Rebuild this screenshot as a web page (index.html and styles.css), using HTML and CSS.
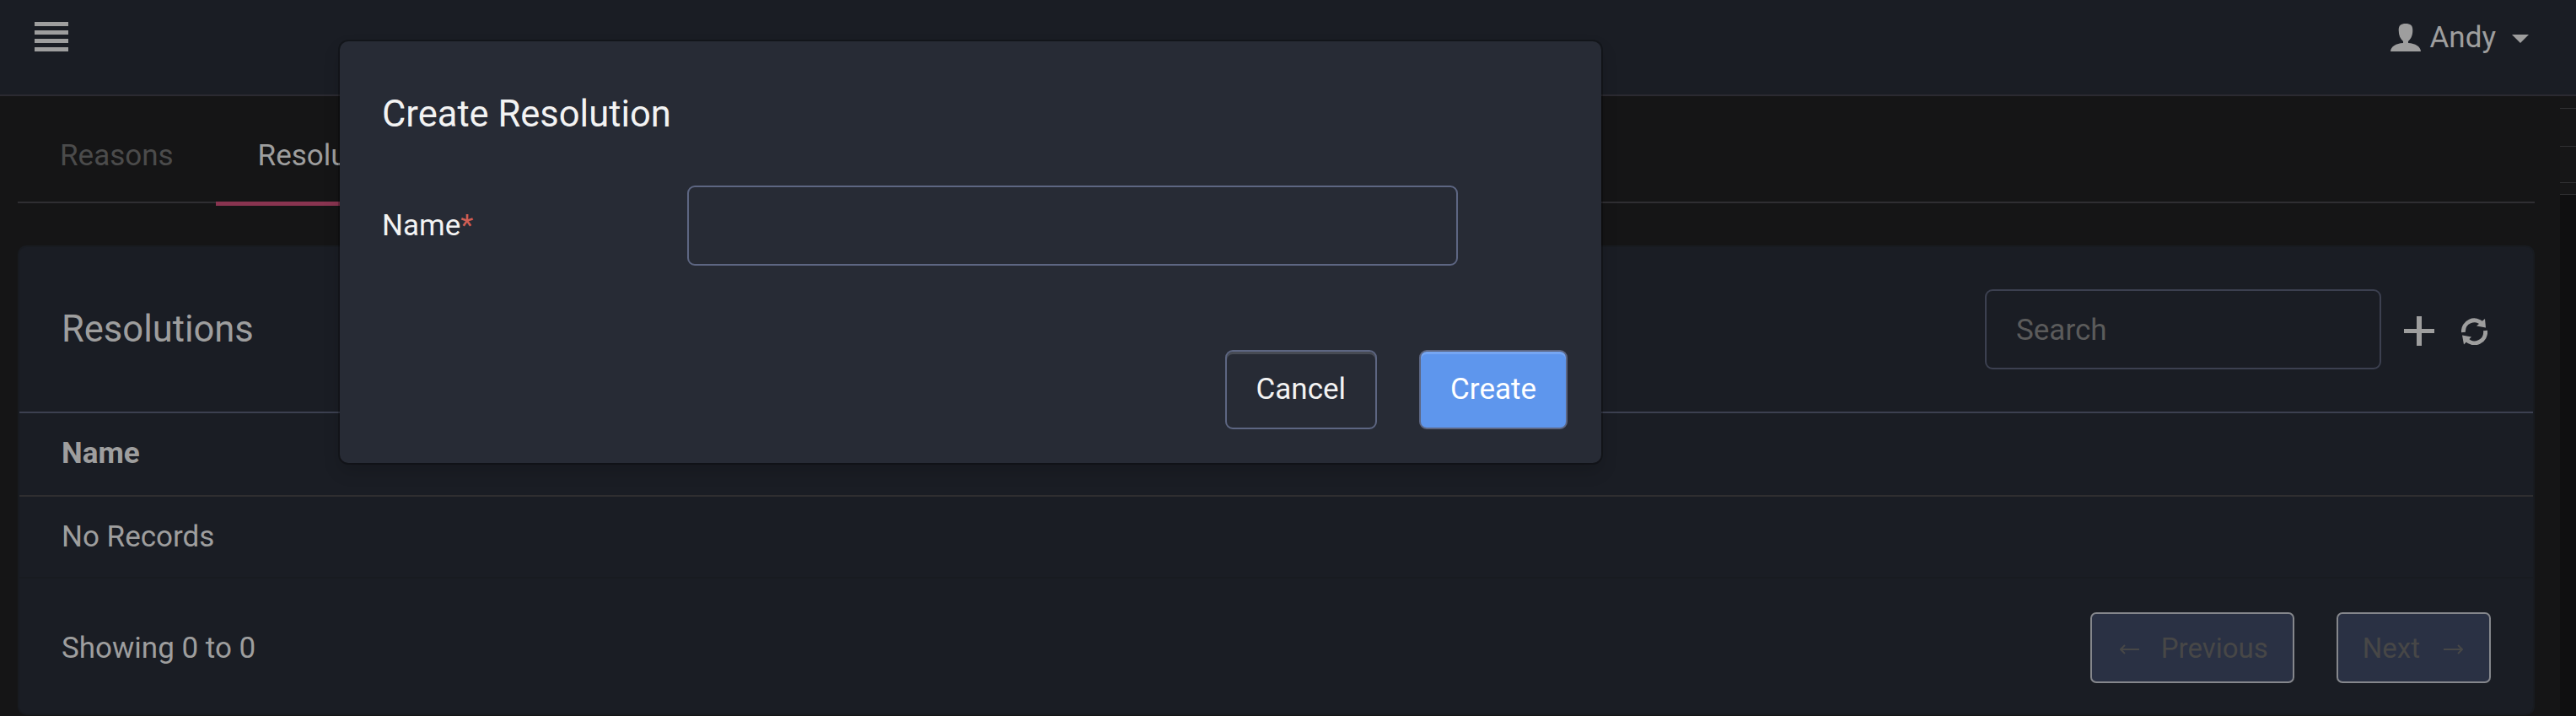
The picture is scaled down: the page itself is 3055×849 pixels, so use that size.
FILE: index.html
```html
<!DOCTYPE html>
<html lang="en">
<head>
    <meta charset="UTF-8">
    <meta name="viewport" content="width=device-width, initial-scale=1.0">
    <title>Resolutions</title>
    <link rel="stylesheet" href="styles.css">
</head>
<body>
    <header class="navbar">
        <button class="menu-toggle" aria-label="Menu">
            <svg width="40" height="35" viewBox="0 0 40 35"><path d="M0 0h40v5H0zM0 10h40v5H0zM0 20h40v5H0zM0 30h40v5H0z"/></svg>
        </button>
        <div class="user-menu">
            <svg class="user-icon" width="36" height="33" viewBox="0 0 36 33"><path d="M18 0c5.500 0 8.500 2 8.300 8 0 6-2 10-5.300 13v2c8.500.5 14.500 4 15 10H0c.5-6 6.500-9.500 15-10v-2c-3.300-3-5.200-7-5.300-13C9.500 2 12.500 0 18 0z"/></svg>
            <span class="user-name">Andy</span>
            <span class="caret"></span>
        </div>
    </header>

    <div class="page">
        <main class="content">
            <nav class="tabs">
                <a class="tab">Reasons</a>
                <a class="tab active">Resolutions</a>
            </nav>

            <section class="card">
                <div class="card-header">
                    <h2>Resolutions</h2>
                    <div class="tools">
                        <input class="search" type="text" placeholder="Search">
                        <svg class="plus" width="36" height="35" viewBox="0 0 36 35"><path d="M15 0h6v15h15v5H21v15h-6V20H0v-5h15z"/></svg>
                        <svg class="refresh" width="31" height="32" viewBox="0 0 31 32">
                            <path class="arc" d="M2.500 17A13 13 0 0 1 25 7M28.500 15A13 13 0 0 1 6 25.500"/>
                            <path d="M28 1l1 10.500-11-2zM1 20.500l11 2-9 9z"/>
                        </svg>
                    </div>
                </div>
                <div class="row row-head">Name</div>
                <div class="row">No Records</div>
                <div class="card-footer">
                    <span>Showing 0 to 0</span>
                    <div class="pager">
                        <button class="page-btn prev" disabled><svg width="23" height="12" viewBox="0 0 23 12"><path d="M23 6H1M6 1L1 6l5 5"/></svg><span>Previous</span></button>
                        <button class="page-btn next" disabled><span>Next</span><svg width="23" height="12" viewBox="0 0 23 12"><path d="M0 6h22M17 1l5 5-5 5"/></svg></button>
                    </div>
                </div>
            </section>
        </main>
        <aside class="rail">
            <div class="rail-item rail-first"></div>
            <div class="rail-item rail-second"></div>
            <div class="rail-item rail-third"></div>
            <div class="rail-item rail-fourth"></div>
        </aside>
    </div>

    <div class="dialog" role="dialog">
        <h3>Create Resolution</h3>
        <div class="field">
            <label for="name">Name<span class="required">*</span></label>
            <input id="name" type="text">
        </div>
        <div class="actions">
            <button class="btn">Cancel</button>
            <button class="btn btn-primary">Create</button>
        </div>
    </div>
</body>
</html>
```

FILE: styles.css
```css
* {
    box-sizing: border-box;
}
html,
body {
    height: 100%;
    margin: 0;
    overflow: hidden;
}
body {
    display: flex;
    flex-direction: column;
    background-color: #151516;
    color: #9e9e9e;
    font-family: Roboto, "Liberation Sans", sans-serif;
    font-size: 35px;
}
h2,
h3 {
    margin: 0;
    font-weight: 400;
}
input,
button {
    font: inherit;
}
svg {
    display: block;
    flex: none;
    fill: #9e9e9e;
}
.navbar {
    display: flex;
    flex: none;
    justify-content: space-between;
    align-items: flex-start;
    height: 114px;
    padding: 26px 56px 0 41px;
    background-color: #1a1d24;
    border-bottom: 2px solid #2b2a31;
}
.menu-toggle {
    padding: 0;
    border: 0;
    background: none;
}
.user-menu {
    display: flex;
    align-items: center;
    height: 36px;
}
.user-name {
    margin-left: 11px;
}
.caret {
    margin: 4px 0 0 19px;
    border: 10px solid transparent;
    border-top-color: #9e9e9e;
    border-bottom: 0;
}
.page {
    display: flex;
    flex: 1;
    min-height: 0;
}
.content {
    flex: 1;
    padding: 0 30px 0 21px;
}
.tabs {
    display: flex;
    height: 127px;
    border-bottom: 2px solid #2f2e32;
}
.tab {
    height: 130px;
    padding: 50px 50px 0;
    line-height: 41px;
    color: #4b4b4b;
}
.tab.active {
    color: #9e9e9e;
    border-bottom: 5px solid #893450;
}
.card {
    height: 557px;
    margin-top: 50px;
    border: 2px solid #181b20;
    border-radius: 10px;
    background-color: #1a1d24;
}
.card-header {
    display: flex;
    justify-content: space-between;
    align-items: center;
    height: 197px;
    padding: 0 54px 0 50px;
    border-bottom: 2px solid #3c4050;
}
.card-header h2 {
    font-size: 43.5px;
}
.tools {
    display: flex;
    align-items: center;
}
.search {
    width: 470px;
    height: 95px;
    padding: 2px 35px 0;
    border: 2px solid #3c4050;
    border-radius: 9px;
    background: none;
    color: #9e9e9e;
}
.search::placeholder {
    color: #5b5b5b;
}
.plus {
    margin: 4px 0 0 27px;
}
.refresh {
    margin: 5px 0 0 32px;
}
.arc {
    fill: none;
    stroke: #9e9e9e;
    stroke-width: 5;
}
.row {
    height: 97px;
    padding-left: 50px;
    line-height: 96px;
    border-bottom: 2px solid #181b20;
}
.row-head {
    height: 99px;
    font-weight: 700;
    border-color: #2f2e30;
}
.card-footer {
    display: flex;
    justify-content: space-between;
    align-items: flex-start;
    padding: 40px 50px 0;
    line-height: 85px;
}
.pager {
    display: flex;
    gap: 50px;
}
.page-btn {
    display: flex;
    align-items: center;
    height: 84px;
    border: 2px solid #85878c;
    border-radius: 7px;
    background-color: #2a3144;
    color: #474747;
    font-size: 33px;
}
.page-btn svg {
    margin-top: 4px;
    fill: none;
    stroke: #474747;
    stroke-width: 2;
}
.prev {
    gap: 26px;
    padding: 0 29px 0 33px;
}
.next {
    gap: 28px;
    padding: 0 31px 0 29px;
}
.rail {
    width: 19px;
    background-color: #0f0f10;
}
.rail-item {
    background-color: #161617;
    border-bottom: 1px solid #303032;
}
.rail-first {
    height: 15px;
}
.rail-second {
    height: 45px;
}
.rail-third {
    height: 43px;
}
.rail-fourth {
    height: 14px;
}

.dialog {
    position: absolute;
    top: 49px;
    left: 403px;
    width: 1496px;
    height: 500px;
    padding: 61px 40px 0 50px;
    border-radius: 10px;
    background-color: #272b35;
    box-shadow: 0 0 0 2px rgba(0, 0, 0, .25), 0 10px 20px rgba(0, 0, 0, .15);
    color: #f3f3f3;
}
.dialog h3 {
    font-size: 43.5px;
    line-height: 52px;
}
.field {
    display: flex;
    align-items: center;
    margin-top: 58px;
}
.field label {
    width: 362px;
}
.field input {
    width: 914px;
    height: 95px;
    border: 2px solid #5d6682;
    border-radius: 9px;
    background: none;
}
.required {
    color: #d05e54;
}
.actions {
    display: flex;
    justify-content: flex-end;
    gap: 50px;
    margin-top: 100px;
}
.btn {
    height: 94px;
    padding: 0 35px 2px;
    border: 2px solid #5d6682;
    border-radius: 9px;
    background: none;
    box-shadow: inset 0 3px 0 #474b54;
    color: #f3f3f3;
}
.btn-primary {
    background-color: #5e96ed;
    box-shadow: inset 0 3px 0 #76a6f2;
    color: #fff;
}
```
